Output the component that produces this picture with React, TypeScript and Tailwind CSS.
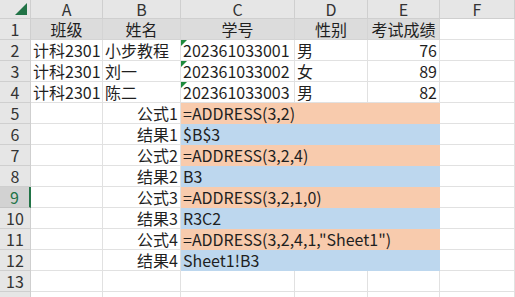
import React from 'react';

type Cell = {
  text?: string;
  align?: 'left' | 'right' | 'center';
  fill?: string;
  span?: number;
  flag?: boolean;
};

const cols = ['A', 'B', 'C', 'D', 'E', 'F'];

const orange = 'bg-[#f8cbad]';
const blue = 'bg-[#bdd7ee]';
const head = 'bg-[#dcdcdc]';

// formula demo block: label in B, formula/result spread over C:E
const demo = (label: string, value: string, fill: string): Cell[] => [
  {},
  { text: label, align: 'right' },
  { text: value, fill, span: 3 },
  {},
];

const rows: Cell[][] = [
  [
    { text: '班级', align: 'center', fill: head },
    { text: '姓名', align: 'center', fill: head },
    { text: '学号', align: 'center', fill: head },
    { text: '性别', align: 'center', fill: head },
    { text: '考试成绩', align: 'center', fill: head },
    {},
  ],
  [
    { text: '计科2301' },
    { text: '小步教程' },
    { text: '202361033001', flag: true },
    { text: '男' },
    { text: '76', align: 'right' },
    {},
  ],
  [
    { text: '计科2301' },
    { text: '刘一' },
    { text: '202361033002', flag: true },
    { text: '女' },
    { text: '89', align: 'right' },
    {},
  ],
  [
    { text: '计科2301' },
    { text: '陈二' },
    { text: '202361033003', flag: true },
    { text: '男' },
    { text: '82', align: 'right' },
    {},
  ],
  demo('公式1', '=ADDRESS(3,2)', orange),
  demo('结果1', '$B$3', blue),
  demo('公式2', '=ADDRESS(3,2,4)', orange),
  demo('结果2', 'B3', blue),
  demo('公式3', '=ADDRESS(3,2,1,0)', orange),
  demo('结果3', 'R3C2', blue),
  demo('公式4', '=ADDRESS(3,2,4,1,"Sheet1")', orange),
  demo('结果4', 'Sheet1!B3', blue),
  [{}, {}, {}, {}, {}, {}],
  [{}, {}, {}, {}, {}, {}],
];

const activeRow = 9;

export default function App() {
  return (
    <div
      className="w-[515px] h-[297px] overflow-hidden bg-white text-[16px] leading-[19px] text-[#1f1f1f]"
      style={{ fontFamily: '"Noto Sans CJK SC", "Liberation Sans", sans-serif' }}
    >
      <div className="grid grid-cols-[31px_72px_78px_114px_73px_72px_1fr] grid-rows-[19px] auto-rows-[21px]">
        {/* corner */}
        <div className="relative bg-[#e6e6e6] border-r border-b border-[#cfcfcf]">
          <svg className="absolute right-[3px] bottom-[3px]" width="12" height="12" viewBox="0 0 12 12">
            <polygon points="12,0 12,12 0,12" fill="#217346" />
          </svg>
        </div>
        {cols.map((c) => (
          <div
            key={c}
            className="flex items-center justify-center overflow-hidden bg-[#e6e6e6] border-r border-b border-[#cfcfcf] text-[#333]"
          >
            {c}
          </div>
        ))}

        {rows.map((row, i) => {
          const n = i + 1;
          const active = n === activeRow;
          return (
            <React.Fragment key={n}>
              <div
                className={
                  active
                    ? 'flex items-center justify-center bg-[#d2d2d2] border-b border-[#c4c4c4] border-r-2 border-r-[#217346] text-[#217346]'
                    : 'flex items-center justify-center bg-[#e6e6e6] border-r border-b border-[#cfcfcf] text-[#333]'
                }
              >
                {n}
              </div>
              {row.map((cell, j) => {
                const justify =
                  cell.align === 'right'
                    ? 'justify-end'
                    : cell.align === 'center'
                      ? 'justify-center'
                      : 'justify-start';
                const lines = cell.fill ? 'border-[#d4d4d4]' : 'border-[#e1e1e1]';
                return (
                  <div
                    key={j}
                    className={`relative flex items-center whitespace-nowrap px-[2px] border-r border-b ${lines} ${justify} ${cell.fill ?? ''} ${cell.span === 3 ? 'col-span-3 border-b-0 border-r-0 pb-px' : ''}`}
                  >
                    {cell.flag && (
                      <svg className="absolute left-0 top-0" width="6" height="6" viewBox="0 0 6 6">
                        <polygon points="0,0 6,0 0,6" fill="#1e8a3c" />
                      </svg>
                    )}
                    {cell.text}
                  </div>
                );
              })}
            </React.Fragment>
          );
        })}
      </div>
    </div>
  );
}
